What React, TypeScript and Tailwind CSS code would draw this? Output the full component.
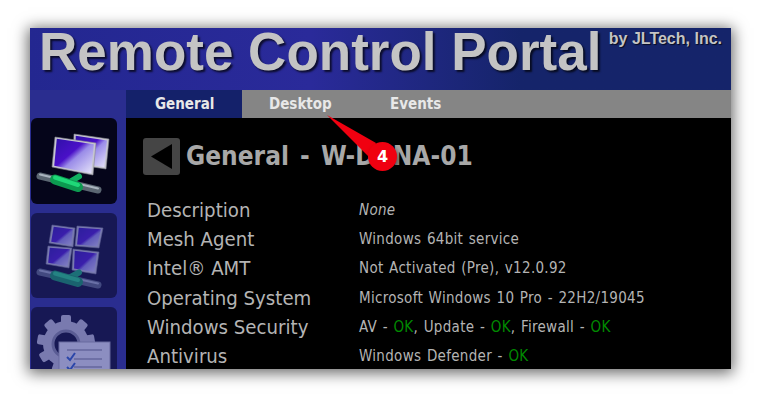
const rows: { label: string; value: React.ReactNode }[] = [
  { label: 'Description', value: <i>None</i> },
  { label: 'Mesh Agent', value: 'Windows 64bit service' },
  { label: 'Intel® AMT', value: 'Not Activated (Pre), v12.0.92' },
  { label: 'Operating System', value: 'Microsoft Windows 10 Pro - 22H2/19045' },
  {
    label: 'Windows Security',
    value: (
      <>
        AV - <span className="text-[#008a00]">OK</span>, Update - <span className="text-[#008a00]">OK</span>, Firewall - <span className="text-[#008a00]">OK</span>
      </>
    ),
  },
  {
    label: 'Antivirus',
    value: (
      <>
        Windows Defender - <span className="text-[#008a00]">OK</span>
      </>
    ),
  },
];

function Screen({ points, fill }: { points: [number, number][]; fill: string }) {
  const [a, b, c, d] = points;
  // frame, then the glass inset by about 2px
  const cx = (a[0] + b[0] + c[0] + d[0]) / 4;
  const cy = (a[1] + b[1] + c[1] + d[1]) / 4;
  const inner = points
    .map(([x, y]) => {
      const dx = x - cx;
      const dy = y - cy;
      const len = Math.hypot(dx, dy);
      return `${x - (dx / len) * 2.5},${y - (dy / len) * 2.5}`;
    })
    .join(' ');
  return (
    <g>
      <polygon points={points.map((p) => p.join(',')).join(' ')} fill="#c6c6d0" stroke="#85858f" strokeWidth="0.6" />
      <polygon points={inner} fill={fill} />
    </g>
  );
}

function Pipe({ y1, y2 }: { y1: number; y2: number }) {
  const mid = (y1 + y2) / 2;
  return (
    <g>
      <path d={`M9 ${y1} L67 ${y2}`} stroke="#5b6672" strokeWidth="7" strokeLinecap="round" />
      <path d={`M9 ${y1 - 1.5} L67 ${y2 - 1.5}`} stroke="#a9b3be" strokeWidth="2" strokeLinecap="round" />
      <path d={`M37 ${mid} L48 ${y1 + 0.5}`} stroke="#10b060" strokeWidth="6" strokeLinecap="round" />
      <path d={`M24 ${y1 + 3.5} L47 ${y2 - 3}`} stroke="#0c9a50" strokeWidth="10" strokeLinecap="round" />
      <path d={`M24 ${y1 + 1.5} L47 ${y2 - 5}`} stroke="#1fd878" strokeWidth="4" strokeLinecap="round" />
    </g>
  );
}

function NetworkIcon() {
  return (
    <svg viewBox="0 0 86 86" className="h-full w-full">
      <defs>
        <linearGradient id="scr" x1="0" y1="0" x2="1" y2="1">
          <stop offset="0" stopColor="#2f10a8" />
          <stop offset="0.42" stopColor="#4a10c8" />
          <stop offset="0.55" stopColor="#9a8ce8" />
          <stop offset="1" stopColor="#e8e6fa" />
        </linearGradient>
      </defs>
      <Screen points={[[43, 16], [78, 21], [75, 51], [42, 46]]} fill="url(#scr)" />
      <Screen points={[[24, 19], [65, 25], [62, 57], [21, 49]]} fill="url(#scr)" />
      <Pipe y1={58} y2={72} />
    </svg>
  );
}

function GridIcon() {
  return (
    <svg viewBox="0 0 86 85" className="h-full w-full">
      <defs>
        <linearGradient id="scr2" x1="0" y1="0" x2="1" y2="1">
          <stop offset="0" stopColor="#2f10a8" />
          <stop offset="0.5" stopColor="#4a10c8" />
          <stop offset="0.6" stopColor="#9a8ce8" />
          <stop offset="1" stopColor="#dcd8f6" />
        </linearGradient>
      </defs>
      <Screen points={[[21, 12], [44, 15], [42, 34], [18, 30]]} fill="url(#scr2)" />
      <Screen points={[[46, 13], [72, 15], [68, 35], [44, 33]]} fill="url(#scr2)" />
      <Screen points={[[17, 33], [41, 35], [38, 55], [15, 51]]} fill="url(#scr2)" />
      <Screen points={[[42, 36], [68, 39], [65, 61], [41, 57]]} fill="url(#scr2)" />
      <Pipe y1={59} y2={72} />
    </svg>
  );
}

function GearIcon() {
  const teeth = [0, 40, 80, 120, 160, 200, 240, 280, 320];
  return (
    <svg viewBox="0 0 86 86" className="h-full w-full">
      <g transform="translate(35 37)">
        {teeth.map((a) => (
          <rect key={a} x="-5" y="-29" width="10" height="10" rx="2" fill="#c7c7d0" transform={`rotate(${a})`} />
        ))}
        <circle r="23" fill="#c7c7d0" />
        <circle r="13" fill="#05051a" stroke="#8b8b99" strokeWidth="3" />
      </g>
      <rect x="28" y="35" width="51" height="51" fill="#eeeef4" stroke="#a5a5b0" />
      <path d="M36 43H71M43 52H71M43 60H71" stroke="#777786" strokeWidth="1" />
      <path d="M36 50l3 3 5-7M36 60l3 3 5-7" stroke="#2b5fc4" strokeWidth="2" fill="none" />
    </svg>
  );
}

export default function App() {
  return (
    <div className="h-[401px] w-[761px] overflow-hidden bg-white pl-[30px] pt-[28px]">
      <div className="relative h-[341px] w-[701px] shadow-[0_2px_14px_2px_rgba(0,0,0,0.6)]">
        <div className="h-full w-full overflow-hidden bg-[#2a2d8f] font-['DejaVu_Sans',sans-serif] font-stretch-condensed">
          {/* Banner */}
          <div className="flex h-[62px] items-start justify-between bg-gradient-to-r from-[#232790] from-0% via-[#2a2a9a] via-40% to-[#15246a] to-70% pl-[9px] pr-[9px]">
            <div className="font-['Liberation_Sans',sans-serif] text-[53px] font-bold leading-[48px] text-[#c4c4c4] [text-shadow:2px_2px_2px_rgba(0,0,0,0.7)]">
              Remote Control Portal
            </div>
            <div className="pt-[2px] font-['Liberation_Sans',sans-serif] text-[16px] font-bold leading-[18px] text-[#c4c4c4] [text-shadow:1px_1px_1px_rgba(0,0,0,0.7)]">
              by JLTech, Inc.
            </div>
          </div>

          <div className="flex h-[279px]">
            {/* Side icons */}
            <div className="w-[96px] shrink-0 pl-px pt-[28px]">
              <div className="flex flex-col gap-[9px]">
                <div className="h-[86px] w-[86px] rounded-[6px] bg-[#05051a]">
                  <NetworkIcon />
                </div>
                <div className="h-[85px] w-[86px] rounded-[6px] bg-[#05051a] opacity-50">
                  <GridIcon />
                </div>
                <div className="h-[86px] w-[86px] rounded-[6px] bg-[#05051a] opacity-50">
                  <GearIcon />
                </div>
              </div>
            </div>

            <div className="min-w-0 flex-1">
              {/* Tabs */}
              <div className="flex h-[28px] bg-[#858585] text-[15px] font-bold leading-[28px] text-[#e8e8e8]">
                <div className="w-[116px] bg-[#14216a] pl-[29px]">General</div>
                <div className="w-[148px] pl-[27px]">Desktop</div>
                <div>Events</div>
              </div>

              {/* Content */}
              <div className="h-[251px] bg-black pl-[17px] pt-[20px]">
                <div className="flex items-center gap-[6px]">
                  <div className="flex h-[37px] w-[37px] items-center justify-center rounded-[3px] bg-[#454545]">
                    <svg viewBox="0 0 37 37" className="h-[37px] w-[37px]">
                      <path d="M8 18.5 L29 6 V31 Z" fill="#000" />
                    </svg>
                  </div>
                  <h1 className="text-[26px] font-bold leading-[37px] text-[#a8a8a8] [word-spacing:3px]">General - W-DANA-01</h1>
                </div>
                <div className="mt-[21px] pl-[4px]">
                  {rows.map((row) => (
                    <div key={row.label} className="flex h-[29.2px] items-center">
                      <div className="w-[212px] shrink-0 text-[20.2px] leading-[29px] text-[#b4b4b4]">{row.label}</div>
                      <div className="text-[15px] leading-[29px] tracking-[0.3px] text-[#b4b4b4] [word-spacing:1px]">{row.value}</div>
                    </div>
                  ))}
                </div>
              </div>
            </div>
          </div>
        </div>

        {/* Annotation callout */}
        <svg className="absolute left-[297px] top-[87px] h-[45px] w-[60px]" viewBox="0 0 60 45">
          <path d="M0 0 L49 28 L43 43 Z" fill="#f00010" />
        </svg>
        <div className="absolute left-[338px] top-[114px] flex h-[29px] w-[29px] items-center justify-center rounded-full bg-[#f00010] font-['DejaVu_Sans',sans-serif] text-[16px] font-bold text-white shadow-[2px_3px_5px_rgba(0,0,0,0.5)]">
          4
        </div>
      </div>
    </div>
  );
}
